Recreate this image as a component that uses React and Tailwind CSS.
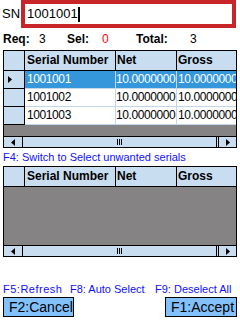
import React from "react";

const rows = ["1001001", "1001002", "1001003"];

const ScrollBar = () => {
  return (
    <div className="flex h-[11px] border-t border-black bg-[#c9ddf0]">
      <div className="w-[19px] shrink-0 border-r border-black flex items-center justify-center">
        <svg width="5" height="7" viewBox="0 0 5 7">
          <path d="M4 0 L0 3.5 L4 7 Z" fill="#000" />
        </svg>
      </div>
      <div className="flex-1 flex items-center justify-center">
        <div className="flex gap-[1px] h-[6px]">
          <div className="w-[1px] bg-black" />
          <div className="w-[1px] bg-black" />
          <div className="w-[1px] bg-black" />
        </div>
      </div>
      <div className="w-[20px] shrink-0 border-l-[3px] border-double border-black flex items-center justify-center">
        <svg width="5" height="7" viewBox="0 0 5 7">
          <path d="M1 0 L5 3.5 L1 7 Z" fill="#000" />
        </svg>
      </div>
    </div>
  );
};

const Header = () => {
  return (
    <div className="flex h-[20px] bg-[#c9ddf0] border-b border-black font-bold text-[12px] leading-[19px] whitespace-nowrap">
      <div className="w-[21px] shrink-0 border-r border-black" />
      <div className="w-[91px] shrink-0 border-r border-black pl-[2px] overflow-hidden">Serial Number</div>
      <div className="w-[61px] shrink-0 border-r border-black pl-[1px] overflow-hidden">Net</div>
      <div className="flex-1 min-w-0 pl-[1px] overflow-hidden">Gross</div>
    </div>
  );
};

const Grid = ({ items, bodyHeight }) => {
  return (
    <div className="mx-[3px] border border-black flex flex-col">
      <Header />
      {items.map((sn, i) => {
        const sel = i === 0;
        const cell = sel ? "bg-[#3497db] text-white" : "bg-white text-black";
        return (
          <div key={sn} className="flex h-[18px] text-[12px] leading-[17px] tracking-[-0.4px] whitespace-nowrap">
            <div className="w-[21px] shrink-0 bg-[#c9ddf0] border-r border-b border-black flex items-center pl-[4px]">
              {sel && (
                <svg width="4" height="7" viewBox="0 0 4 7">
                  <path d="M0 0 L4 3.5 L0 7 Z" fill="#000" />
                </svg>
              )}
            </div>
            <div className={`w-[91px] shrink-0 border-r border-b border-[#c2d6ec] pl-[2px] overflow-hidden ${cell}`}>
              {sn}
            </div>
            <div className={`w-[61px] shrink-0 border-r border-b border-[#c2d6ec] overflow-hidden ${cell}`}>
              10.0000000
            </div>
            <div className={`flex-1 min-w-0 border-b border-[#c2d6ec] overflow-hidden pl-[1px] ${cell}`}>
              10.0000000
            </div>
          </div>
        );
      })}
      <div className="bg-[#858383]" style={{ height: bodyHeight }} />
      <ScrollBar />
    </div>
  );
};

export default function App() {
  return (
    <div
      className="w-[240px] h-[320px] bg-white flex flex-col overflow-hidden text-black"
      style={{ fontFamily: '"Liberation Sans", Arial, sans-serif' }}
    >
      <div className="flex items-center h-[28px]">
        <div className="w-[21px] shrink-0 pl-[2px] text-[13px]">SN</div>
        <div className="w-[215px] shrink-0 h-[28px] border-[4px] border-[#c7252a] bg-white flex items-center pl-[2px] text-[13px]">
          <span>1001001</span>
          <span className="w-[2px] h-[15px] bg-black" />
        </div>
      </div>

      <div className="flex h-[18px] mt-[2px] items-center text-[12px] whitespace-nowrap">
        <span className="w-[39px] shrink-0 pl-[3px] font-bold">Req:</span>
        <span className="w-[28px] shrink-0">3</span>
        <span className="w-[35px] shrink-0 font-bold">Sel:</span>
        <span className="w-[34px] shrink-0 text-[#ff0000]">0</span>
        <span className="w-[54px] shrink-0 font-bold">Total:</span>
        <span>3</span>
      </div>

      <div className="mt-[2px]">
        <Grid items={rows} bodyHeight={11} />
      </div>

      <div className="h-[18px] pl-[3px] text-[11px] leading-[19px] text-[#1010ff] whitespace-nowrap">
        F4: Switch to Select unwanted serials
      </div>

      <Grid items={[]} bodyHeight={58} />

      <div className="flex-1" />

      <div className="flex h-[14px] text-[11px] leading-[14px] text-[#1010ff] whitespace-nowrap pl-[3px]">
        <span className="w-[67px] shrink-0 tracking-[0.5px]">F5:Refresh</span>
        <span className="w-[85px] shrink-0">F8: Auto Select</span>
        <span>F9: Deselect All</span>
      </div>

      <div className="flex justify-between px-[3px] mb-[3px] mt-[1px]">
        <div className="w-[71px] h-[20px] bg-[#82c1fc] border border-black text-[14px] leading-[18px] pl-[5px]">
          F2:Cancel
        </div>
        <div className="w-[72px] h-[20px] bg-[#82c1fc] border border-black text-[14px] leading-[18px] pl-[5px]">
          F1:Accept
        </div>
      </div>
    </div>
  );
}
